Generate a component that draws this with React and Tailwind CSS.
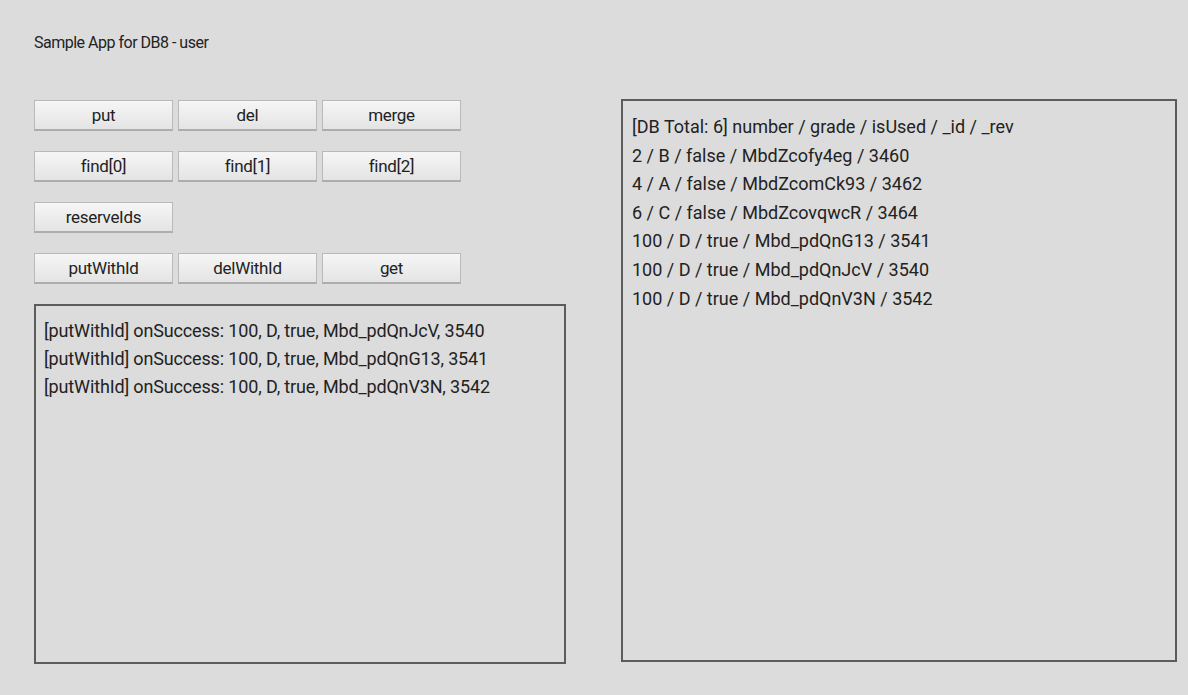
import React from 'react';

const rows = [
  ['put', 'del', 'merge'],
  ['find[0]', 'find[1]', 'find[2]'],
  ['reserveIds'],
  ['putWithId', 'delWithId', 'get'],
];

const logLines = [
  '[putWithId] onSuccess: 100, D, true, Mbd_pdQnJcV, 3540',
  '[putWithId] onSuccess: 100, D, true, Mbd_pdQnG13, 3541',
  '[putWithId] onSuccess: 100, D, true, Mbd_pdQnV3N, 3542',
];

const dbLines = [
  '[DB Total: 6] number / grade / isUsed / _id / _rev',
  '2 / B / false / MbdZcofy4eg / 3460',
  '4 / A / false / MbdZcomCk93 / 3462',
  '6 / C / false / MbdZcovqwcR / 3464',
  '100 / D / true / Mbd_pdQnG13 / 3541',
  '100 / D / true / Mbd_pdQnJcV / 3540',
  '100 / D / true / Mbd_pdQnV3N / 3542',
];

const font = { fontFamily: 'Roboto, "Noto Sans", sans-serif' };

const Button = ({ label }) => (
  <button className="w-[139px] h-[31px] border border-[#b9b9b9] border-b-2 border-b-[#adadad] bg-gradient-to-b from-[#f6f6f6] to-[#e4e4e4] text-[17px] tracking-[-0.3px] text-[#222] leading-none" style={font}>
    {label}
  </button>
);

const App = () => {
  return (
    <div className="w-[1188px] h-[695px] bg-[#dcdcdc] text-[#222] overflow-hidden" style={font}>
      <div className="pt-[33px] pl-[34px] text-[16px] tracking-[-0.5px] leading-[20px]">Sample App for DB8 - user</div>

      <div className="flex pl-[34px] mt-[47px]">
        <div className="flex flex-col">
          <div className="flex flex-col gap-[20px]">
            {rows.map((row, i) => (
              <div key={i} className="flex gap-[5px]">
                {row.map((b) => <Button key={b} label={b} />)}
              </div>
            ))}
          </div>
          <div className="mt-[20px] w-[532px] h-[360px] border-2 border-[#5c5c5c] pt-[11px] pl-[8px] text-[18px] tracking-[-0.15px] leading-[28px]">
            {logLines.map((l) => <div key={l}>{l}</div>)}
          </div>
        </div>

        <div className="ml-[55px] -mt-px w-[556px] h-[563px] border-2 border-[#5c5c5c] pt-[12px] pl-[9px] text-[18px] leading-[28.6px]">
          {dbLines.map((l) => <div key={l}>{l}</div>)}
        </div>
      </div>
    </div>
  );
};

export default App;
